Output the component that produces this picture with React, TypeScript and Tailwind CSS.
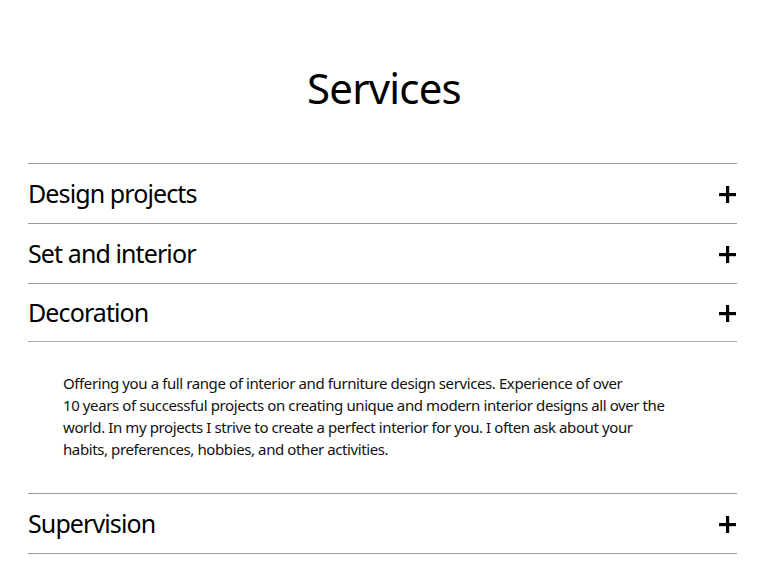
import React from "react";

const Plus = () => (
  <svg width="17" height="17" viewBox="0 0 17 17" className="shrink-0">
    <rect x="7" y="0" width="3.2" height="17" fill="#000" />
    <rect x="0" y="7" width="17" height="3.2" fill="#000" />
  </svg>
);

const Row = ({ title, h = "h-[60px]" }: { title: string; h?: string }) => (
  <div className={`flex items-center justify-between border-t border-[#999] ${h}`}>
    <span className="text-[25px] leading-none tracking-[-0.9px] text-black">{title}</span>
    <span className="mr-[1px] mt-[2px]"><Plus /></span>
  </div>
);

export default function App() {
  return (
    <div className="min-h-[569px] bg-white text-black" style={{ fontFamily: '"Noto Sans", sans-serif' }}>
      <h1 className="pt-[60px] text-center text-[42px] leading-[56px] font-normal tracking-[-0.8px]">Services</h1>
      <div className="mx-[28px] mt-[47px] w-[709px]">
        <Row title="Design projects" />
        <Row title="Set and interior" />
        <Row title="Decoration" h="h-[58px]" />
        <div className="border-t border-[#aaa] pl-[35px] pt-[30px] pb-[33px] text-[15px] leading-[22px] tracking-[-0.4px] text-[#111]">
          Offering you a full range of interior and furniture design services. Experience of over
          <br />
          10 years of successful projects on creating unique and modern interior designs all over the
          <br />
          world. In my projects I strive to create a perfect interior for you. I often ask about your
          <br />
          habits, preferences, hobbies, and other activities.
        </div>
        <Row title="Supervision" />
        <div className="border-t border-[#999]" />
      </div>
    </div>
  );
}
